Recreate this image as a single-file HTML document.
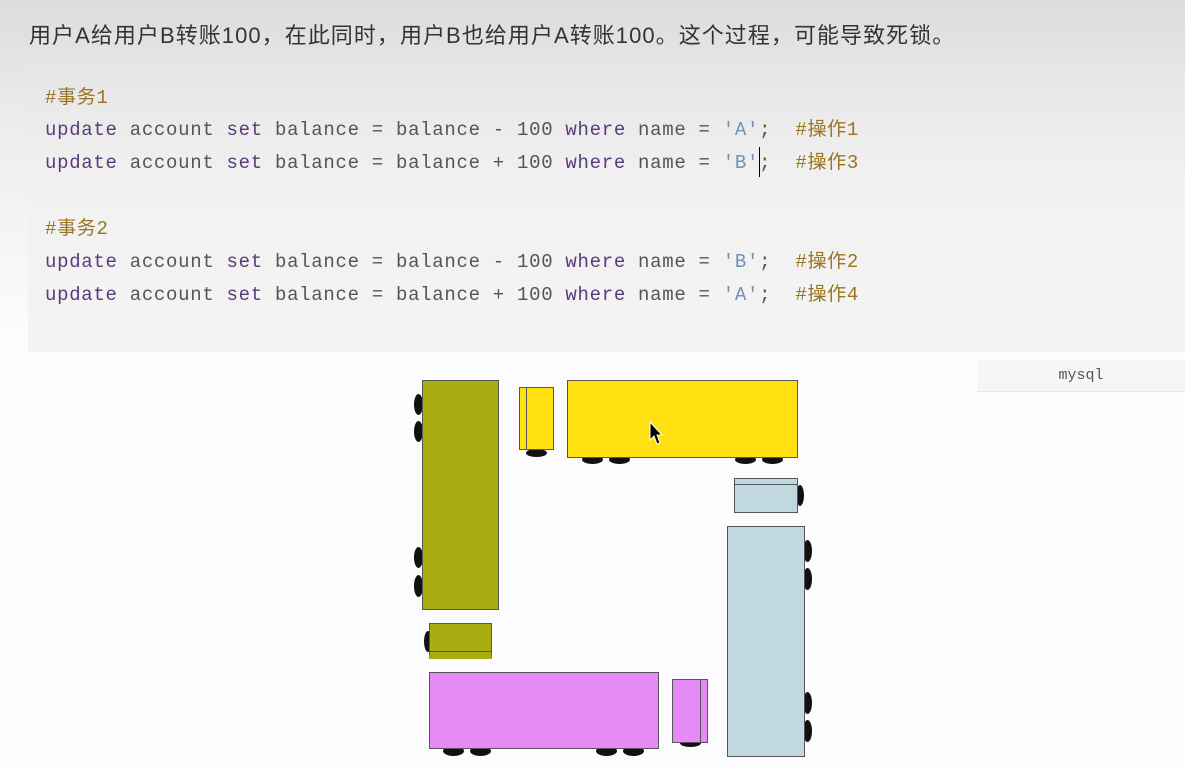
<!DOCTYPE html>
<html><head><meta charset="utf-8"><style>
html,body{margin:0;padding:0;width:1185px;height:769px;overflow:hidden;}
body{background:linear-gradient(180deg,#dcdcdc 0px,#ececec 120px,#f6f6f6 250px,#fefefe 360px);position:relative;font-family:"Liberation Sans","Noto Sans CJK SC",sans-serif;}
.h{position:absolute;left:29px;top:18px;font-size:22px;color:#333;white-space:nowrap;letter-spacing:1.05px}
.code{position:absolute;left:28px;top:70px;width:1157px;height:282px;background:linear-gradient(180deg,#e6e6e6,#f1f1f1 40%,#f4f4f4);}
.ln{position:absolute;left:45px;font-family:"Liberation Mono","Noto Sans CJK SC",monospace;font-size:19px;letter-spacing:0.7px;color:#555;white-space:pre;line-height:22px}
.k{color:#5a3b7a}.s{color:#6f93b8}.c{color:#9a7420}
.tab{position:absolute;left:977px;top:360px;width:208px;height:31px;background:#f6f6f6;border-bottom:1px solid #e6e6e6;font-family:"Liberation Mono",monospace;font-size:15px;color:#555;text-align:center;line-height:32px}
.img{position:absolute;left:403px;top:368px;width:410px;height:401px;background:#fcfcfe}
.b{position:absolute;border:1px solid #555;box-sizing:border-box}
.w{position:absolute;background:#111;border-radius:50%}
</style></head><body>
<div class="h">用户A给用户B转账100，在此同时，用户B也给用户A转账100。这个过程，可能导致死锁。</div>
<div class="code">
</div>
<div class="ln c" style="top:87px">#事务1</div>
<div class="ln" style="top:119px"><span class="k">update</span> account <span class="k">set</span> balance = balance - 100 <span class="k">where</span> name = <span class="s">'A'</span>;  <span class="c">#操作1</span></div>
<div class="ln" style="top:152px"><span class="k">update</span> account <span class="k">set</span> balance = balance + 100 <span class="k">where</span> name = <span class="s">'B'</span>;  <span class="c">#操作3</span></div>
<div style="position:absolute;left:759px;top:147px;width:1px;height:30px;background:#000"></div>
<div class="ln c" style="top:218px">#事务2</div>
<div class="ln" style="top:251px"><span class="k">update</span> account <span class="k">set</span> balance = balance - 100 <span class="k">where</span> name = <span class="s">'B'</span>;  <span class="c">#操作2</span></div>
<div class="ln" style="top:284px"><span class="k">update</span> account <span class="k">set</span> balance = balance + 100 <span class="k">where</span> name = <span class="s">'A'</span>;  <span class="c">#操作4</span></div>
<div class="tab">mysql</div>
<div class="img"></div>
<!-- olive -->
<div class="w" style="left:414px;top:394px;width:9px;height:21px"></div>
<div class="w" style="left:414px;top:421px;width:9px;height:21px"></div>
<div class="w" style="left:414px;top:547px;width:9px;height:21px"></div>
<div class="w" style="left:414px;top:575px;width:9px;height:22px"></div>
<div class="b" style="left:422px;top:380px;width:77px;height:230px;background:#a8ad12"></div>
<div class="w" style="left:424px;top:631px;width:8px;height:21px"></div>
<div class="b" style="left:429px;top:623px;width:63px;height:36px;background:#a8ad12;border-bottom:7px solid #a8ad12;box-shadow:inset 0 -1px 0 #555"></div>
<!-- yellow -->
<div class="w" style="left:526px;top:449px;width:21px;height:8px"></div>
<div class="b" style="left:519px;top:387px;width:35px;height:63px;background:#ffe011"></div>
<div style="position:absolute;left:526px;top:387px;width:1px;height:63px;background:#555"></div>
<div class="w" style="left:582px;top:455px;width:21px;height:9px"></div>
<div class="w" style="left:609px;top:455px;width:21px;height:9px"></div>
<div class="w" style="left:735px;top:455px;width:21px;height:9px"></div>
<div class="w" style="left:762px;top:455px;width:21px;height:9px"></div>
<div class="b" style="left:567px;top:380px;width:231px;height:78px;background:#ffe011"></div>
<!-- blue -->
<div class="w" style="left:796px;top:485px;width:8px;height:21px"></div>
<div class="b" style="left:734px;top:478px;width:64px;height:35px;background:#c1d8e0"></div>
<div style="position:absolute;left:734px;top:484px;width:63px;height:1px;background:#555"></div>
<div class="w" style="left:803px;top:540px;width:9px;height:22px"></div>
<div class="w" style="left:803px;top:568px;width:9px;height:22px"></div>
<div class="w" style="left:803px;top:692px;width:9px;height:22px"></div>
<div class="w" style="left:803px;top:720px;width:9px;height:22px"></div>
<div class="b" style="left:727px;top:526px;width:78px;height:231px;background:#c1d8e0"></div>
<!-- pink -->
<div class="w" style="left:443px;top:746px;width:21px;height:10px"></div>
<div class="w" style="left:470px;top:746px;width:21px;height:10px"></div>
<div class="w" style="left:596px;top:746px;width:21px;height:10px"></div>
<div class="w" style="left:623px;top:746px;width:21px;height:10px"></div>
<div class="b" style="left:429px;top:672px;width:230px;height:77px;background:#e68af5"></div>
<div class="w" style="left:680px;top:739px;width:21px;height:8px"></div>
<div class="b" style="left:672px;top:679px;width:36px;height:64px;background:#e68af5"></div>
<div style="position:absolute;left:700px;top:679px;width:1px;height:63px;background:#555"></div>
<!-- cursor -->
<svg style="position:absolute;left:649px;top:421px" width="16" height="26" viewBox="0 0 16 26"><path d="M1 1 L1 19 L5 15 L8 23 L11 22 L8 14 L13 14 Z" fill="#000" stroke="#fff" stroke-width="1"/></svg>
</body></html>
